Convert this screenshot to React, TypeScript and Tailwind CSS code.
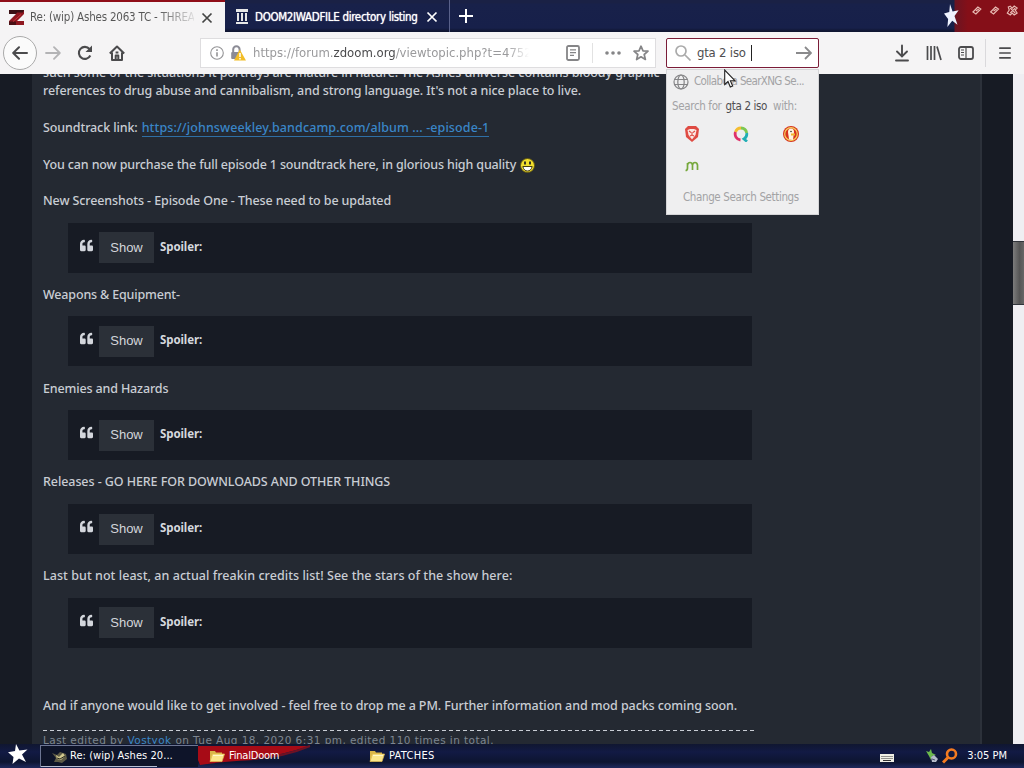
import React from "react";
import { FaQuoteLeft } from "react-icons/fa";

const UI = "font-['DejaVu_Sans_Condensed','DejaVu_Sans',sans-serif] [font-stretch:condensed]";

function Close({ className }: { className: string }) {
  return (
    <svg viewBox="0 0 12 12" className={`size-3 shrink-0 ${className}`} fill="none" stroke="currentColor" strokeWidth="1.7">
      <path d="M1.5 1.5 10.5 10.5M10.5 1.5 1.5 10.5" />
    </svg>
  );
}

function Star({ className }: { className: string }) {
  return (
    <svg viewBox="0 0 20 20" className={className} fill="currentColor" preserveAspectRatio="none">
      <path d="M8 0 11.4 6.5 19.5 5.5 14 10.5 18 18 11 14.5 4.5 20 5.5 13 0 8.2 7 7Z" />
    </svg>
  );
}

function Folder() {
  return (
    <svg viewBox="0 0 16 14" className="h-3.5 w-4 shrink-0">
      <path d="M1 2h5l1 1.5h6V6H4L1 12Z" fill="#d9b548" />
      <path d="M1 12.5 3.5 5H15.5L13 12.5Z" fill="#fbe68a" stroke="#e5bf55" strokeWidth=".7" />
      <path d="M4 6.5h10" stroke="#fff7c9" />
    </svg>
  );
}

function TitleBar() {
  return (
    <div className="flex h-8 bg-[linear-gradient(#1a2145_0,#1a2145_3px,#18214a_4px,#17204a_28px,#101632_31px)]">
      <div className="flex h-8 w-[225px] items-center border-t-2 border-[#8f0d18] bg-[#f5f4f5] pl-[9px]">
        <svg viewBox="0 0 16 15" className="h-[15px] w-4 shrink-0">
          <path d="M0 0H15V4L8 11H15V15H0V11L7 4H0Z" fill="#8f1820" />
          <path d="M0 0H15L14 2.5H8L7 4H0Z" fill="#3a1014" />
          <path d="M0 11.5H7V15H0Z" fill="#4a1014" />
          <path d="M4 11.5 12 4.5" stroke="#c8343c" strokeWidth="1" />
        </svg>
        <span className={`${UI} ml-[5px] mt-px w-[164px] overflow-hidden whitespace-nowrap bg-[linear-gradient(90deg,#555_78%,#55555522)] bg-clip-text text-[11.5px] tracking-[-0.2px] text-transparent`}>
          Re: (wip) Ashes 2063 TC - THREA
        </span>
        <Close className="ml-[7px] mt-px text-[#444]" />
      </div>
      <div className="flex h-8 w-[225px] items-center border-r border-[#59618a] pl-[10px]">
        <svg viewBox="0 0 14 16" className="mt-px h-4 w-3.5 shrink-0" fill="#e6e6e6">
          <path d="M1 0h12v3H1ZM2 4h2v8H2Zm4 0h2v8H6Zm4 0h2v8h-2ZM1 13h12v2H1Z" />
        </svg>
        <span className={`${UI} ml-[6px] mt-[3px] w-[163px] whitespace-nowrap text-[11.5px] tracking-[-0.33px] text-white [text-shadow:0_0_1px_#fff]`}>
          DOOM2IWADFILE directory listing
        </span>
        <Close className="ml-2 mt-[2px] text-white" />
      </div>
      <svg viewBox="0 0 14 14" className="ml-[9px] mt-[9px] size-3.5 stroke-white" strokeWidth="2">
        <path d="M7 0v14M0 7h14" />
      </svg>
      <div className="ml-auto flex h-8 w-[80px] bg-[linear-gradient(90deg,transparent_10px,#6a1422_11px,#850f18_24px)]">
        <Star className="mt-[4px] h-[23px] w-[15px] shrink-0 text-[#eef2ff]" />
        <svg viewBox="0 0 54 14" className="ml-[12px] mt-[4px] h-3.5 w-[54px]" fill="none" stroke="#e9bcb4" strokeWidth="1.2">
          <path d="m2 8 5-5 3 2-5 5Zm3-1 3-2M20 8l5-5 3 2-5 5Zm3-1 3-2M38 3l2-1 2 2 2-2 3 2-2 2 2 3-3 2-2-2-2 2-3-2 2-3Zm2 1 5 5m0-5-5 5" />
        </svg>
      </div>
    </div>
  );
}

function Toolbar() {
  return (
    <div className="flex h-[42px] items-center bg-[#f5f4f5] text-[#4b4b4d]">
      <div className="ml-[3px] flex size-[34px] items-center justify-center rounded-full border border-[#aaa] bg-[#fbfbfb]">
        <svg viewBox="0 0 16 16" className="size-4" fill="none" stroke="currentColor" strokeWidth="2" strokeLinecap="round" strokeLinejoin="round">
          <path d="M15 8H1.5M7 2.2 1.2 8 7 13.8" />
        </svg>
      </div>
      <svg viewBox="0 0 16 16" className="ml-[8px] size-4 text-[#b3b3b5]" fill="none" stroke="currentColor" strokeWidth="1.8" strokeLinecap="round" strokeLinejoin="round">
        <path d="M1 8h13.5M9 2.2 14.8 8 9 13.8" />
      </svg>
      <svg viewBox="0 0 16 16" className="ml-4 size-4" fill="none" stroke="currentColor" strokeWidth="2.1">
        <path d="M13.3 10.5A6 6 0 1 1 12.5 4" />
        <path d="M15 .5V7H8.5Z" fill="currentColor" stroke="none" />
      </svg>
      <svg viewBox="0 0 16 16" className="ml-4 size-4" fill="none" stroke="currentColor" strokeWidth="2" strokeLinejoin="round">
        <path d="m.8 8.5 7.2-7 7.2 7M3 7.5V15h10V7.5" />
        <path d="M6.7 15v-4.5h2.6V15M6.6 7.4h2.8" />
      </svg>
      <div className="ml-[75px] flex h-[30px] w-[456px] items-center border border-[#dedddf] bg-white pl-[9px] text-[#8b8b8d]">
        <svg viewBox="0 0 14 14" className="size-3.5 shrink-0" fill="none" stroke="#949496" strokeWidth="1.1">
          <circle cx="7" cy="7" r="6.3" />
          <path d="M7 6.2v4.3M7 3.3v1.6" strokeWidth="1.6" />
        </svg>
        <svg viewBox="0 0 16 16" className="ml-[6px] size-4 shrink-0">
          <path d="M3.2 8V4.5a3.2 3.2 0 0 1 6.4 0V8" fill="none" stroke="#8b8b95" strokeWidth="2" />
          <rect x="1.2" y="7" width="10" height="7" rx="1" fill="#8b8b95" />
          <path d="M9.8 4.5 16 15.5H4Z" fill="#f2bd27" />
          <path d="M10 8v4M10 13v1.4" stroke="#fff" strokeWidth="1.5" />
        </svg>
        <span className={`${UI} ml-[7px] w-[276px] overflow-hidden whitespace-nowrap text-[13px] text-[#9a9a9c] [mask-image:linear-gradient(90deg,#000_92%,transparent)]`}>
          https://forum.<span className="text-[#4a4a4c]">zdoom.org</span>/viewtopic.php?t=4752
        </span>
        <svg viewBox="0 0 14 16" className="ml-auto h-4 w-3.5 shrink-0" fill="none" stroke="#858587" strokeWidth="1.8">
          <rect x="1" y="1" width="12" height="14" rx="1.5" />
          <path d="M4 4.8h6M4 7.6h6M4 10.4h4" strokeWidth="1.2" />
        </svg>
        <div className="ml-[12px] h-5 w-px bg-[#e2e2e2]" />
        <svg viewBox="0 0 16 4" className="ml-[12px] h-1 w-4 shrink-0" fill="#858587">
          <circle cx="2" cy="2" r="1.8" /><circle cx="8" cy="2" r="1.8" /><circle cx="14" cy="2" r="1.8" />
        </svg>
        <svg viewBox="0 0 16 16" className="ml-[12px] mr-[6px] size-4 shrink-0" fill="none" stroke="#858587" strokeWidth="1.7" strokeLinejoin="round">
          <path d="m8 1.2 2 4.6 5 .4-3.8 3.3 1.2 5L8 11.8l-4.4 2.7 1.2-5L1 6.2l5-.4Z" />
        </svg>
      </div>
      <div className="ml-[10px] flex h-[30px] w-[153px] items-center rounded-[2px] border border-[#7b1d38] bg-white pl-2">
        <svg viewBox="0 0 16 16" className="size-4 shrink-0" fill="none" stroke="#aaa" strokeWidth="1.7">
          <circle cx="6" cy="6" r="5" /><path d="m10 10 5.5 5.5" />
        </svg>
        <span className={`${UI} ml-[6px] whitespace-nowrap text-[13px] tracking-[-0.2px] text-[#4e4e50]`}>gta 2 iso</span>
        <span className="ml-[5px] h-4 w-px bg-[#222]" />
        <svg viewBox="0 0 16 16" className="ml-auto mr-[6px] size-4" fill="none" stroke="#8a8a8c" strokeWidth="1.8">
          <path d="M0 8h15M9 2l6 6-6 6" />
        </svg>
      </div>
      <svg viewBox="0 0 16 18" className="ml-[75px] h-[18px] w-4" fill="none" stroke="currentColor" strokeWidth="1.9" strokeLinecap="round">
        <path d="M8 1.5V12M3 7.5l5 5 5-5M2 16.5h12" />
      </svg>
      <svg viewBox="0 0 16 16" className="ml-4 size-4" fill="none" stroke="currentColor" strokeWidth="1.7">
        <path d="M1.5 1v14M5 1v14M8.5 1v14M11 1.5l4 13.5" />
      </svg>
      <svg viewBox="0 0 16 14" className="ml-4 h-3.5 w-4" fill="none" stroke="currentColor" strokeWidth="1.8">
        <rect x="1" y="1" width="14" height="12" rx="2" />
        <path d="M8 1v12M3 4h3M3 6.5h3M3 9h3" strokeWidth="1.2" />
      </svg>
      <div className="ml-[11px] h-7 w-px bg-[#dad9dc]" />
      <svg viewBox="0 0 12 12" className="ml-[13px] size-3" fill="none" stroke="currentColor" strokeWidth="1.7" strokeLinecap="round">
        <path d="M.8 1.2h10.4M.8 6h10.4M.8 10.8h10.4" />
      </svg>
    </div>
  );
}

function Spoiler() {
  return (
    <div className="ml-[25px] flex h-[50px] w-[684px] items-center bg-[#171b24] pl-[12px]">
      <FaQuoteLeft className="mb-[5px] size-[13px] text-[#d3d6dc]" />
      <div className="ml-[6px] flex h-[31px] w-[55px] items-center justify-center bg-[#2b3038] font-['Liberation_Sans',sans-serif] text-[13px] text-[#d3d6db]">
        Show
      </div>
      <span className="mb-[2px] ml-[6px] font-['Noto_Sans',sans-serif] text-[11.5px] font-bold tracking-[-0.1px] text-[#d5d8de]">Spoiler:</span>
    </div>
  );
}

const sections = [
  { title: "New Screenshots - Episode One - These need to be updated", track: "tracking-[-0.11px]" },
  { title: "Weapons & Equipment-", track: "tracking-[-0.17px]" },
  { title: "Enemies and Hazards", track: "tracking-[-0.15px]" },
  { title: "Releases - GO HERE FOR DOWNLOADS AND OTHER THINGS", track: "tracking-[-0.08px]" },
  { title: "Last but not least, an actual freakin credits list! See the stars of the show here:", track: "tracking-[0.05px]" },
];

function Page() {
  return (
    <div className="flex h-[670px] overflow-hidden bg-[#171b24]">
      <main className="ml-8 w-[950px] border-r-2 border-[#2c313a] bg-[#242932] pl-[11px] font-['Noto_Sans',sans-serif] text-[12.5px] font-medium leading-[18px] text-[#c9cdd4]">
        <div className="-mt-[10px] whitespace-nowrap tracking-[-0.08px]">such some of the situations it portrays are mature in nature. The Ashes universe contains bloody graphic</div>
        <div className="whitespace-nowrap tracking-[-0.09px]">references to drug abuse and cannibalism, and strong language. It's not a nice place to live.</div>
        <div className="mt-[19px] flex whitespace-nowrap tracking-[-0.1px]">
          Soundtrack link:
          <span className="ml-1 h-[18px] border-b border-[#2f6fa5] tracking-[0.1px] text-[#3a86c8]">https://johnsweekley.bandcamp.com/album ... -episode-1</span>
        </div>
        <div className="mt-[19px] flex h-[18px] items-center whitespace-nowrap tracking-[-0.14px]">
          You can now purchase the full episode 1 soundtrack here, in glorious high quality
          <svg viewBox="0 0 15 15" className="ml-1 mt-px size-[15px]">
            <circle cx="7.5" cy="7.5" r="7" fill="#f2df2d" stroke="#5c5312" />
            <path d="M5 3.5v3M10 3.5v3" stroke="#222" strokeWidth="1.8" />
            <path d="M2.8 8.5h9.4Q11 13 7.5 13T2.8 8.5" fill="#fff" stroke="#443c10" />
          </svg>
        </div>
        <div className="mt-[18px]">
          {sections.map((s) => (
            <section key={s.title} className="mb-[13.1px]">
              <div className={`mb-[12.7px] whitespace-nowrap ${s.track}`}>{s.title}</div>
              <Spoiler />
            </section>
          ))}
        </div>
        <div className="mt-[49px] whitespace-nowrap tracking-[-0.085px]">And if anyone would like to get involved - feel free to drop me a PM. Further information and mod packs coming soon.</div>
        <div className="mt-[15px] h-px w-[711px] bg-[repeating-linear-gradient(90deg,#c9cdd4_0,#c9cdd4_4px,transparent_4px,transparent_7px)]" />
        <div className="whitespace-nowrap font-['DejaVu_Sans',sans-serif] text-[10.5px] font-normal leading-[18px] tracking-[0.43px] text-[#7d8691]">
          Last edited by <span className="text-[#3a86c8]">Vostyok</span> on Tue Aug 18, 2020 6:31 pm, edited 110 times in total.
        </div>
      </main>
      <div className="ml-auto flex w-[11px] flex-col bg-[#efeef2]">
        <div className="mt-[167px] h-16 border-y border-[#30343a] bg-[linear-gradient(90deg,#7c7c7c,#555_60%,#666)]" />
      </div>
    </div>
  );
}

function SearchPopup() {
  return (
    <div className={`${UI} absolute left-[666px] top-[69px] flex h-[146px] w-[153px] flex-col border border-[#d5d5d7] bg-[#efeff0] text-[11.5px] text-[#a3a3a5]`}>
      <div className="flex h-[22px] items-center whitespace-nowrap pl-[6px] pt-[2px] tracking-[-0.65px]">
        <svg viewBox="0 0 16 16" className="mr-[5px] size-4 shrink-0" fill="none" stroke="#858587" strokeWidth="1.2">
          <circle cx="8" cy="8" r="7" /><ellipse cx="8" cy="8" rx="3.2" ry="7" /><path d="M1.5 5.5h13M1.5 10.5h13" />
        </svg>
        Collabora SearXNG Se...
      </div>
      <div className="mt-[5px] flex h-[20px] items-center whitespace-nowrap pl-[5px] tracking-[-0.35px]">
        Search for<span className="ml-1 mr-[6px] text-[#4e4e50]">gta 2 iso</span>with:
      </div>
      <div className="grid grid-cols-3 pr-[2px] pt-[2px]">
        <div className="flex h-8 items-center justify-center">
          <svg viewBox="0 0 16 16" className="size-4">
            <path d="m4 0h8l3 3-1 8-6 5-6-5-1-8Z" fill="#df4b43" />
            <path d="m3.5 4 2.5-1h4l2.5 1-1 5L8 13.5 4.5 9Z" fill="#fbe9e5" />
            <path d="m5 5 2 1.5M11 5 9 6.500M8 6v3M6 10l2-1 2 1" stroke="#df4b43" strokeWidth="1.1" fill="none" />
          </svg>
        </div>
        <div className="flex h-8 items-center justify-center">
          <svg viewBox="0 0 16 16" className="size-4" fill="none" strokeWidth="2.8">
            <path d="M8 2A6 6 0 0 0 2.5 6" stroke="#f4bd31" />
            <path d="M2.5 6A6 6 0 0 0 7.5 14" stroke="#df3269" />
            <path d="M8 2A6 6 0 0 1 13.7 7" stroke="#7ec850" />
            <path d="M13.7 7A6 6 0 0 1 11 13l3 2.5" stroke="#22aeb5" />
          </svg>
        </div>
        <div className="flex h-8 items-center justify-center">
          <svg viewBox="0 0 16 16" className="size-4">
            <circle cx="8" cy="8" r="8" fill="#d7331e" />
            <circle cx="8" cy="8" r="6.3" fill="none" stroke="#f5d35c" strokeWidth="1.2" />
            <path d="M6 13.5 5 6q0-3.5 3-3.5T11 6l-1 8Z" fill="#fff4df" />
            <path d="M8 7.5h4v2H8Z" fill="#f0b72b" />
            <circle cx="8" cy="5.5" r=".8" fill="#333" />
          </svg>
        </div>
        <div className="flex h-8 items-center justify-center">
          <svg viewBox="0 0 14 12" className="h-3 w-3.5" fill="none" stroke="#76a83c" strokeWidth="1.7">
            <path d="M.5 10.5Q2.5 10.5 2.5 8V3M2.5 5Q3 2.5 5 2.5T7.5 5V10M7.5 5Q8 2.5 10 2.5T12.5 5V10" />
          </svg>
        </div>
      </div>
      <div className="mt-auto flex h-[33px] items-center whitespace-nowrap pl-[16px] tracking-[-0.38px]">Change Search Settings</div>
    </div>
  );
}

function Taskbar() {
  return (
    <div className={`${UI} flex h-6 items-center bg-[linear-gradient(#101630,#121a44_8px,#0d1530_18px,#1c2656_23px)] text-[11px] text-white`}>
      <Star className="ml-[8px] mt-[-4px] size-[20px] shrink-0" />
      <div className="ml-[12px] flex h-[22px] w-[158px] items-center border-l border-t border-[#6c7592] bg-[#0e1429] bg-[linear-gradient(#b8bfd2,#b8bfd2)] bg-[length:116px_1px] bg-[position:0_100%] bg-no-repeat pl-[11px]">
        <svg viewBox="0 0 16 14" className="h-3.5 w-4 shrink-0">
          <path d="m0 3 5 2 3-3 6 2 1 5-5 4-4-1-4 0 2-4Z" fill="#5f5c46" />
          <path d="m4 5 3 2 4-4 2 3-4 4-4-1Z" fill="#d2c98e" />
          <path d="m5 8 3 1 5-3" stroke="#29291f" fill="none" />
        </svg>
        <span className="ml-[2px] whitespace-nowrap tracking-[0.06px]">Re: (wip) Ashes 20...</span>
      </div>
      <div className="relative flex h-6 w-[160px] items-center pl-[11px]">
        <svg viewBox="0 0 160 24" className="absolute inset-0 h-6 w-40">
          <path d="M0 2H112Q86 10 56 16Q20 18 2 21L0 16Z" fill="#a70b16" />
          <path d="M112 2Q86 13 54 15" stroke="#6d1224" strokeWidth="2" fill="none" />
        </svg>
        <span className="relative flex items-center">
          <Folder />
          <span className="ml-[4px] tracking-[-0.2px]">FinalDoom</span>
        </span>
      </div>
      <div className="flex items-center pl-[11px]">
        <Folder />
        <span className="ml-[4px] tracking-[0.3px]">PATCHES</span>
      </div>
      <svg viewBox="0 0 14 8" className="ml-auto mt-[4px] h-2 w-3.5">
        <path d="M0 0h14v8H0Z" fill="#f0f0e6" />
        <path d="M1.5 2.5h11M1.5 4.5h11" stroke="#333" strokeDasharray="1 1" />
        <path d="M3 6.5h8" stroke="#333" />
      </svg>
      <svg viewBox="0 0 14 14" className="ml-[31px] size-3.5">
        <path d="m1 2 3 1 2-3 1 4 4 2-4 1-1 4-2-4Z" fill="#6cba4c" />
        <path d="m6 8 3-2 4 4-2 3H7Z" fill="#b6bccb" /><path d="m7 10 3 1" stroke="#4c5470" />
      </svg>
      <svg viewBox="0 0 16 16" className="ml-[3px] size-4" fill="none" stroke="#f47b20">
        <circle cx="9.5" cy="6" r="4.5" strokeWidth="2.6" /><path d="m6 9.5-5 5" strokeWidth="3" />
      </svg>
      <span className="ml-[9px] mr-[17px] whitespace-nowrap">3:05 PM</span>
    </div>
  );
}

export default function App() {
  return (
    <div className="relative h-[768px] w-[1024px] overflow-hidden">
      <TitleBar />
      <Toolbar />
      <Page />
      <Taskbar />
      <SearchPopup />
      <svg viewBox="0 0 12 19" className="absolute left-[724px] top-[69px] h-[19px] w-3">
        <path d="M.7 1v14.5l3.3-3 2.3 5.5 2.4-1-2.3-5.3h4.5Z" fill="#fff" stroke="#222" strokeWidth="1.1" />
      </svg>
    </div>
  );
}
